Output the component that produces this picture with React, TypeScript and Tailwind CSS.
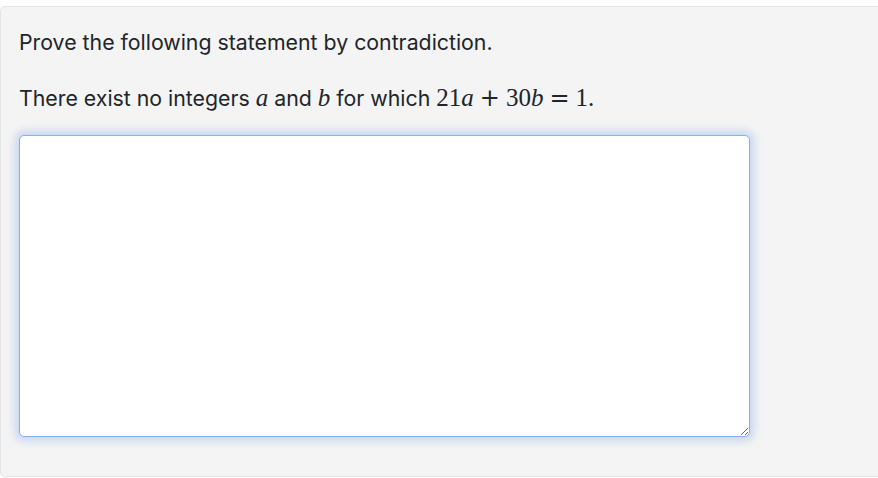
import React from "react";

function M({ children }: { children: React.ReactNode }) {
  return <span className="font-['Liberation_Serif',serif] text-[25px] leading-none">{children}</span>;
}

function V({ children }: { children: React.ReactNode }) {
  return <span className="font-['Liberation_Serif',serif] italic text-[25px] leading-none">{children}</span>;
}

function Op({ children }: { children: React.ReactNode }) {
  return <span className="font-['DejaVu_Serif',serif] text-[24px] leading-none mx-[6px]">{children}</span>;
}

export default function App() {
  return (
    <div className="w-[878px] h-[478px] bg-white pt-[6px] font-['Inter',sans-serif] text-[#212529]">
      <div className="h-[471px] w-[890px] bg-[#f4f4f4] border border-[#e4e4e4] rounded-[5px] pl-[18px] pt-[20px]">
        <p className="text-[21.3px] leading-[30px]">Prove the following statement by contradiction.</p>
        <p className="text-[21.3px] leading-[30px] mt-[26px]">
          There exist no integers <V>a</V> and <V>b</V> for which{" "}
          <M>21</M>
          <V>a</V>
          <Op>+</Op>
          <M>30</M>
          <V>b</V>
          <Op>=</Op>
          <M>1.</M>
        </p>
        <textarea
          className="block mt-[22px] w-[731px] h-[302px] bg-white rounded-[5px] border border-[#86b0ef] outline-none shadow-[0_0_9px_4px_rgba(130,170,230,0.4)]"
        />
      </div>
    </div>
  );
}
